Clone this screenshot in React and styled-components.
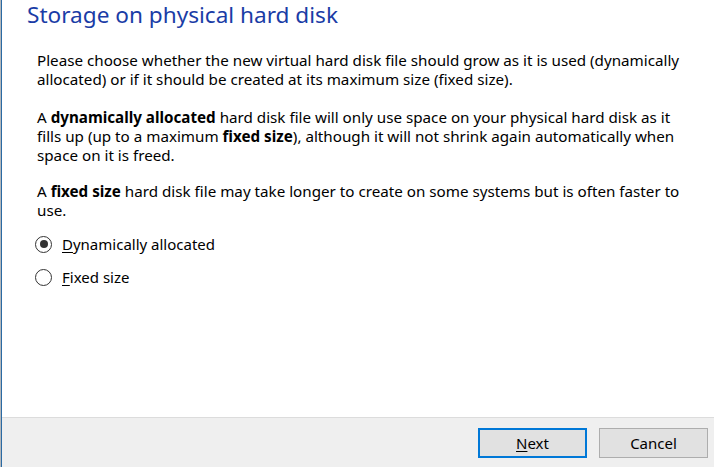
import React, { useState } from "react";
import styled, { createGlobalStyle } from "styled-components";

const GlobalStyle = createGlobalStyle`
  html, body {
    margin: 0;
    padding: 0;
    background: #ffffff;
  }
  body {
    font-family: "Noto Sans", "Open Sans", sans-serif;
  }
`;

const Frame = styled.div`
  width: 714px;
  height: 467px;
  display: flex;
  flex-direction: column;
  box-sizing: border-box;
  border-left: 1px solid #b4b8bc;
  background: #ffffff;
  overflow: hidden;
`;

const Inner = styled.div`
  flex: 1;
  display: flex;
  flex-direction: column;
  border-left: 1px solid #2b6aa3;
  min-height: 0;
`;

const Content = styled.div`
  flex: 1;
  padding: 0 4px 0 35px;
  color: #000;
`;

const Title = styled.h1`
  margin: 0 0 0 -10px;
  font-size: 22.6px;
  font-weight: 400;
  line-height: 30px;
  color: #1a3ca6;
`;

const Para = styled.p`
  margin: ${(p) => p.$top || 0}px 0 0;
  font-size: 15.2px;
  line-height: 19px;
  white-space: nowrap;
`;

const Options = styled.div`
  margin-top: 14px;
  display: flex;
  flex-direction: column;
  gap: 13px;
`;

const Option = styled.label`
  display: flex;
  align-items: center;
  gap: 10px;
  font-size: 15px;
  line-height: 20px;
  cursor: default;
`;

const Ring = styled.span`
  width: 17px;
  height: 17px;
  box-sizing: border-box;
  border: 1.2px solid #333;
  border-radius: 50%;
  display: flex;
  align-items: center;
  justify-content: center;
  margin-left: -2px;
  background: #fff;

  &::after {
    content: "";
    width: 8px;
    height: 8px;
    border-radius: 50%;
    background: #333;
    display: ${(p) => (p.$on ? "block" : "none")};
  }
`;

const Key = styled.span`
  text-decoration: underline;
  text-underline-offset: 2px;
`;

const Footer = styled.div`
  height: 50px;
  border-top: 1px solid #dcdcdc;
  background: #efefef;
  display: flex;
  justify-content: flex-end;
  align-items: flex-start;
  gap: 12px;
  padding: 10px 6px 0 0;
  box-sizing: border-box;
`;

const Button = styled.button`
  width: 109px;
  height: 30px;
  box-sizing: border-box;
  background: #e1e1e1;
  border: ${(p) => (p.$primary ? "2px solid #0078d7" : "1px solid #adadad")};
  font-family: "Noto Sans", "Open Sans", sans-serif;
  font-size: 15px;
  color: #000;
  padding: 0;
  cursor: default;
`;

export default function App() {
  const [choice, setChoice] = useState("dynamic");

  return (
    <>
      <GlobalStyle />
      <Frame>
        <Inner>
          <Content>
            <Title>Storage on physical hard disk</Title>
            <Para $top={21}>
              Please choose whether the new virtual hard disk file should grow
              as it is used (dynamically
              <br />
              allocated) or if it should be created at its maximum size (fixed
              size).
            </Para>
            <Para $top={19}>
              A <b>dynamically allocated</b> hard disk file will only use space
              on your physical hard disk as it
              <br />
              fills up (up to a maximum <b>fixed size</b>), although it will not
              shrink again automatically when
              <br />
              space on it is freed.
            </Para>
            <Para $top={17}>
              A <b>fixed size</b> hard disk file may take longer to create on
              some systems but is often faster to
              <br />
              use.
            </Para>
            <Options>
              <Option onClick={() => setChoice("dynamic")}>
                <Ring $on={choice === "dynamic"} />
                <span>
                  <Key>D</Key>ynamically allocated
                </span>
              </Option>
              <Option onClick={() => setChoice("fixed")}>
                <Ring $on={choice === "fixed"} />
                <span>
                  <Key>F</Key>ixed size
                </span>
              </Option>
            </Options>
          </Content>
          <Footer>
            <Button $primary>
              <Key>N</Key>ext
            </Button>
            <Button>Cancel</Button>
          </Footer>
        </Inner>
      </Frame>
    </>
  );
}
